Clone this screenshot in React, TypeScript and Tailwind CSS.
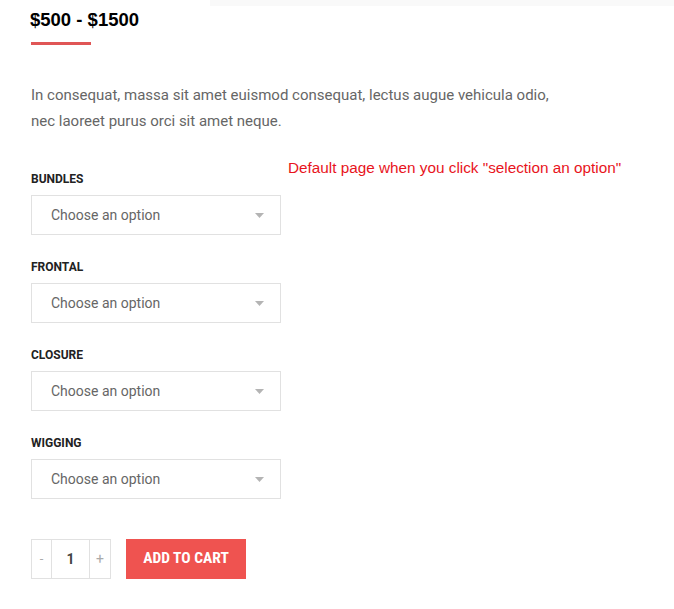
import { useState } from 'react'

const fields = ['BUNDLES', 'FRONTAL', 'CLOSURE', 'WIGGING']

function SelectBox() {
  return (
    <div className="flex h-10 w-[250px] items-center justify-between border border-[#e1e1e1] bg-white pl-[19px] pr-[16px]">
      <span className="text-[14px] text-[#666]">Choose an option</span>
      <svg width="9" height="5" viewBox="0 0 9 5" className="mt-[1px]">
        <path d="M0 0h9L4.5 5z" fill="#b4b4b4" />
      </svg>
    </div>
  )
}

export default function App() {
  const [qty, setQty] = useState(1)

  return (
    <div className="relative min-h-[609px] w-[674px] overflow-hidden bg-white font-['Roboto',sans-serif]">
      {/* faint strip at the top edge */}
      <div className="absolute right-0 top-0 h-[6px] w-[464px] bg-[#f9f9f9]" />

      <div className="relative px-[31px] pt-[8px]">
        <h2 className="font-['Liberation_Sans',Arial,sans-serif] text-[18.5px] font-bold leading-[24px] text-black -ml-[1px]">
          $500 - $1500
        </h2>
        <div className="mt-[10px] h-[3px] w-[60px] bg-[#e05656]" />

        <p className="mt-[37px] text-[15px] leading-[26px] text-[#666]">
          In consequat, massa sit amet euismod consequat, lectus augue vehicula odio,
          <br />
          nec laoreet purus orci sit amet neque.
        </p>

        <div className="relative mt-[37px]">
          <p className="absolute left-[257px] top-[-14px] font-['Liberation_Sans',Arial,sans-serif] text-[15.3px] text-[#e8141c] whitespace-nowrap">
            Default page when you click "selection an option"
          </p>

          <div className="flex flex-col gap-[24px]">
            {fields.map((f) => (
              <div key={f} className="flex flex-col gap-[8px]">
                <label className="text-[12px] font-bold leading-[16px] text-[#222]">{f}</label>
                <SelectBox />
              </div>
            ))}
          </div>

          <div className="mt-10 flex items-center gap-[15px]">
            <div className="flex h-10 border border-[#e1e1e1]">
              <button
                onClick={() => setQty(Math.max(1, qty - 1))}
                className="flex w-[19px] items-center justify-center text-[13px] text-[#aaa]"
              >
                -
              </button>
              <div className="flex w-[39px] items-center justify-center border-x border-[#e1e1e1] text-[14px] font-bold text-[#444]">
                {qty}
              </div>
              <button
                onClick={() => setQty(qty + 1)}
                className="flex w-[20px] items-center justify-center text-[14px] text-[#aaa]"
              >
                +
              </button>
            </div>
            <button className="flex h-10 w-[120px] items-center justify-center bg-[#ef5350] font-['Roboto_Condensed','Liberation_Sans_Narrow','DejaVu_Sans_Condensed',sans-serif] text-[15.5px] font-bold text-white">
              ADD TO CART
            </button>
          </div>
        </div>
      </div>
    </div>
  )
}
